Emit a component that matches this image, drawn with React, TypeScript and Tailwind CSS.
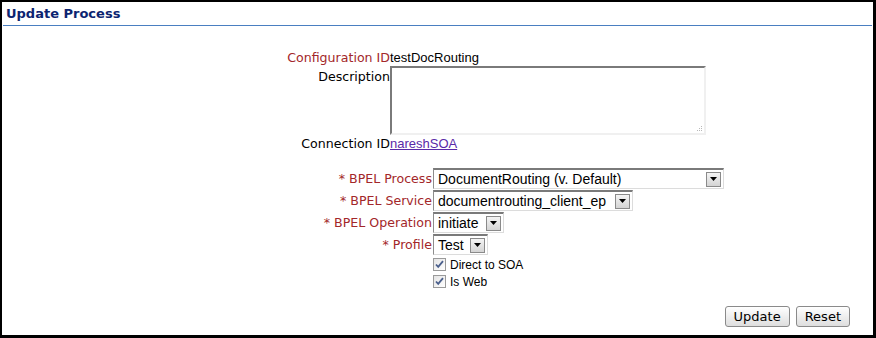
const Arrow = () => (
  <span className="ml-auto mr-[2px] flex h-[15px] w-[15px] shrink-0 items-center justify-center border border-[#8a8a8a] bg-gradient-to-b from-[#f4f4f4] to-[#d4d4d4]">
    <svg width="7" height="4" viewBox="0 0 7 4">
      <path d="M0 0h7L3.5 4z" fill="#000" />
    </svg>
  </span>
);

const Select = ({ value, width }: { value: string; width: string }) => (
  <div
    className={`flex h-[21px] ${width} items-center border border-[#dcdcdc] border-t-[#7a7a7a] border-l-[#8d8d8d] border-t-2 bg-white pl-[4px] text-[14px] text-black`}
  >
    <span className="whitespace-nowrap">{value}</span>
    <Arrow />
  </div>
);

const Check = ({ label }: { label: string }) => (
  <div className="flex h-[17px] items-center">
    <span className="flex h-[13px] w-[13px] items-center justify-center border border-[#9a9a9a] bg-gradient-to-br from-[#e4e4e4] to-white">
      <svg width="9" height="9" viewBox="0 0 9 9">
        <path d="M1 4.5l2.2 2.4L8 1.2" fill="none" stroke="#4a5f8c" strokeWidth="1.8" />
      </svg>
    </span>
    <span className="ml-[4px] text-[12px] text-black">{label}</span>
  </div>
);

const Button = ({ label }: { label: string }) => (
  <button className="h-[21px] rounded-[3px] border border-[#8a8a8a] bg-gradient-to-b from-white to-[#dedede] px-[8px] font-['DejaVu_Sans',sans-serif] text-[13px] text-black">
    {label}
  </button>
);

export default function App() {
  const label = "font-['DejaVu_Sans',sans-serif] text-[12.6px] text-right leading-[16px]";

  return (
    <div className="h-[338px] w-[876px] border-t-2 border-l-2 border-r-[3px] border-b-[3px] border-black bg-white font-['Liberation_Sans',Arial,sans-serif]">
      <div className="mx-[1px] h-[24px] border-b border-[#4a7fc1] pl-[3px] pt-[4px]">
        <h1 className="font-['DejaVu_Sans',sans-serif] text-[13px] font-bold leading-[16px] text-[#0c2470]">
          Update Process
        </h1>
      </div>

      <div className="mt-[24px] flex h-[16px] items-center">
        <span className={`${label} w-[388px] text-[#a3272a]`}>Configuration ID</span>
        <span className="text-[13px] text-black">testDocRouting</span>
      </div>
      <div className="flex">
        <span className={`${label} w-[388px] pt-[3px] text-black`}>Description</span>
        <div className="relative h-[69px] w-[316px] border-2 border-[#f0f0f0] border-t-[#7a7a7a] border-l-[#7a7a7a] bg-white">
          <svg className="absolute bottom-[1px] right-[1px]" width="8" height="8" viewBox="0 0 8 8">
            <g fill="#b8b8b8">
              <rect x="6" y="2" width="1" height="1" />
              <rect x="4" y="4" width="1" height="1" />
              <rect x="6" y="4" width="1" height="1" />
              <rect x="2" y="6" width="1" height="1" />
              <rect x="4" y="6" width="1" height="1" />
              <rect x="6" y="6" width="1" height="1" />
            </g>
          </svg>
        </div>
      </div>
      <div className="mt-[1px] flex h-[16px] items-center">
        <span className={`${label} w-[388px] text-black`}>Connection ID</span>
        <a href="#" className="text-[13px] text-[#5a2aa8] underline">nareshSOA</a>
      </div>

      <div className="mt-[16px] flex flex-col gap-[1px]">
        <div className="flex items-center">
          <span className={`${label} w-[430px] text-[#a3272a]`}>* BPEL Process</span>
          <div className="ml-[1px]"><Select value="DocumentRouting (v. Default)" width="w-[291px]" /></div>
        </div>
        <div className="flex items-center">
          <span className={`${label} w-[430px] text-[#a3272a]`}>* BPEL Service</span>
          <div className="ml-[1px]"><Select value="documentrouting_client_ep" width="w-[200px]" /></div>
        </div>
        <div className="flex items-center">
          <span className={`${label} w-[430px] text-[#a3272a]`}>* BPEL Operation</span>
          <div className="ml-[1px]"><Select value="initiate" width="w-[71px]" /></div>
        </div>
        <div className="flex items-center">
          <span className={`${label} w-[430px] text-[#a3272a]`}>* Profile</span>
          <div className="ml-[1px]"><Select value="Test" width="w-[55px]" /></div>
        </div>
      </div>

      <div className="ml-[431px] mt-[1px]">
        <Check label="Direct to SOA" />
        <Check label="Is Web" />
      </div>

      <div className="mt-[16px] flex justify-end gap-[6px] pr-[23px]">
        <Button label="Update" />
        <Button label="Reset" />
      </div>
    </div>
  );
}
